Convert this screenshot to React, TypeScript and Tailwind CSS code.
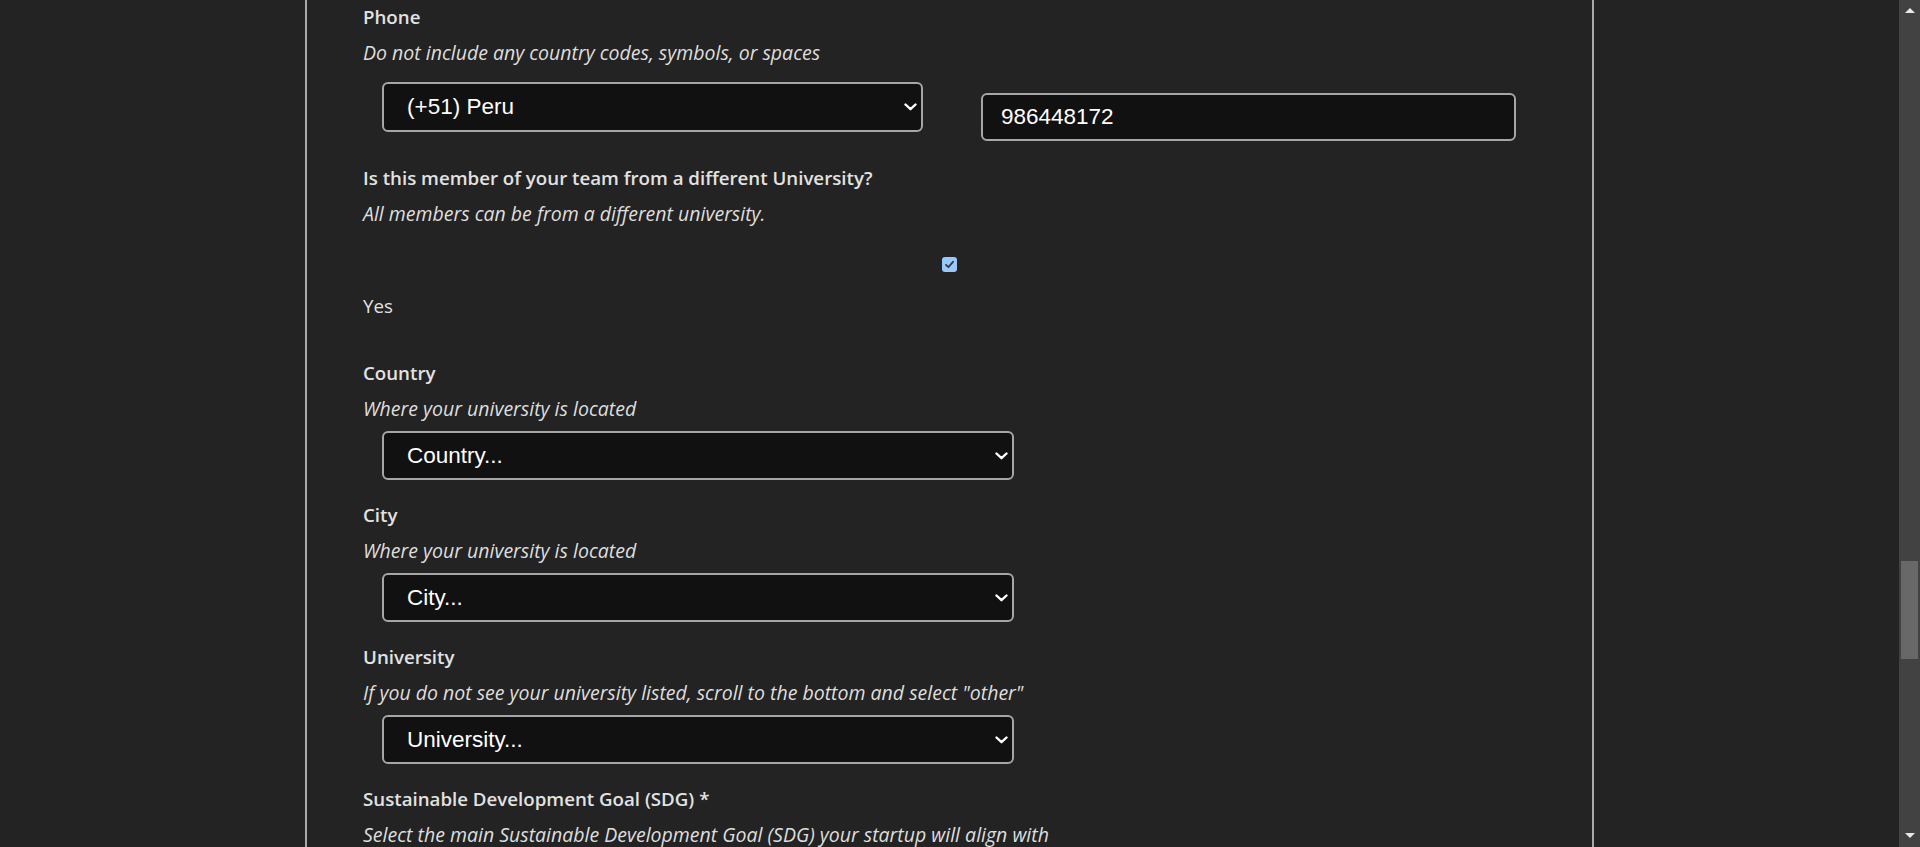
import React from 'react'

const labelCls = "block font-['Open_Sans',sans-serif] font-semibold text-[18.7px] leading-[26px] text-[#e2e2e2]"
const descCls = "block font-['Open_Sans',sans-serif] italic text-[19.5px] leading-[26px] text-[#dedede]"
const fieldCls = "h-full w-full appearance-none rounded-[6px] border-2 border-[#a6a6a6] bg-[#111111] font-['Liberation_Sans',Arial,sans-serif] text-[22.5px] text-white outline-none"

const Chevron = () => (
  <svg className="pointer-events-none absolute right-[6px] top-1/2 -translate-y-1/2" width="13" height="8" viewBox="0 0 13 8" fill="none">
    <path d="M1.5 1.5 L6.5 6.2 L11.5 1.5" stroke="#ffffff" strokeWidth="2.4" strokeLinecap="round" strokeLinejoin="round" />
  </svg>
)

const Select = ({ value, width }: { value: string; width: string }) => (
  <div className={'relative h-[49px] ' + width}>
    <select className={fieldCls + ' pl-[23px] pr-8'} defaultValue={value}>
      <option value={value}>{value}</option>
    </select>
    <Chevron />
  </div>
)

const Field = ({ label, desc, value, first }: { label: string; desc: string; value: string; first?: boolean }) => (
  <div className={first ? 'mt-[41px]' : 'mt-[22px]'}>
    <span className={labelCls}>{label}</span>
    <span className={descCls + ' mt-[10px]'}>{desc}</span>
    <div className="mt-[9px] ml-[19px]">
      <Select value={value} width="w-[632px]" />
    </div>
  </div>
)

export default function App() {
  return (
    <div className="flex h-[847px] w-full overflow-hidden bg-[#232323]">
      <div className="flex-1">
        <div className="mx-auto h-full w-[1289px] border-x-2 border-[#a9a9a9] px-[56px] pt-[4px]">
          {/* Phone */}
          <span className={labelCls}>Phone</span>
          <span className={descCls + ' mt-[10px]'}>Do not include any country codes, symbols, or spaces</span>
          <div className="mt-[16px] flex items-start">
            <div className="ml-[19px]">
              <div className="relative h-[50px] w-[541px]">
                <select className={fieldCls + ' pl-[23px] pr-8'} defaultValue="51">
                  <option value="51">(+51) Peru</option>
                </select>
                <Chevron />
              </div>
            </div>
            <div className="ml-[58px] mt-[11px] h-[48px] w-[535px]">
              <input className={fieldCls + ' pl-[18px]'} defaultValue="986448172" />
            </div>
          </div>

          {/* Different university */}
          <span className={labelCls + ' mt-[24px]'}>Is this member of your team from a different University?</span>
          <span className={descCls + ' mt-[10px]'}>All members can be from a different university.</span>
          <div className="mt-[30px] flex justify-center">
            <span className="flex h-[15px] w-[15px] items-center justify-center rounded-[3px] bg-[#99c8ff]">
              <svg width="11" height="11" viewBox="0 0 11 11" fill="none">
                <path d="M2 5.8 L4.4 8.2 L9 2.8" stroke="#3b3b3b" strokeWidth="1.8" strokeLinecap="round" strokeLinejoin="round" />
              </svg>
            </span>
          </div>
          <span className={"mt-[21px] block font-['Open_Sans',sans-serif] text-[18.7px] leading-[26px] text-[#e2e2e2]"}>Yes</span>

          <Field first label="Country" desc="Where your university is located" value="Country..." />
          <Field label="City" desc="Where your university is located" value="City..." />
          <Field label="University" desc={'If you do not see your university listed, scroll to the bottom and select "other"'} value="University..." />

          {/* SDG */}
          <span className={labelCls + ' mt-[22px]'}>Sustainable Development Goal (SDG) *</span>
          <span className={descCls + ' mt-[10px]'}>Select the main Sustainable Development Goal (SDG) your startup will align with</span>
        </div>
      </div>

      {/* scrollbar */}
      <div className="flex w-[21px] flex-col items-center bg-[#424242]">
        <svg className="mt-[8px]" width="10" height="5" viewBox="0 0 10 5">
          <path d="M0 5 L5 0 L10 5 Z" fill="#e8e8e8" />
        </svg>
        <div className="mt-[548px] h-[98px] w-[17px] bg-[#686868]" />
        <div className="flex-1" />
        <svg className="mb-[9px]" width="10" height="5" viewBox="0 0 10 5">
          <path d="M0 0 L10 0 L5 5 Z" fill="#e8e8e8" />
        </svg>
      </div>
    </div>
  )
}
